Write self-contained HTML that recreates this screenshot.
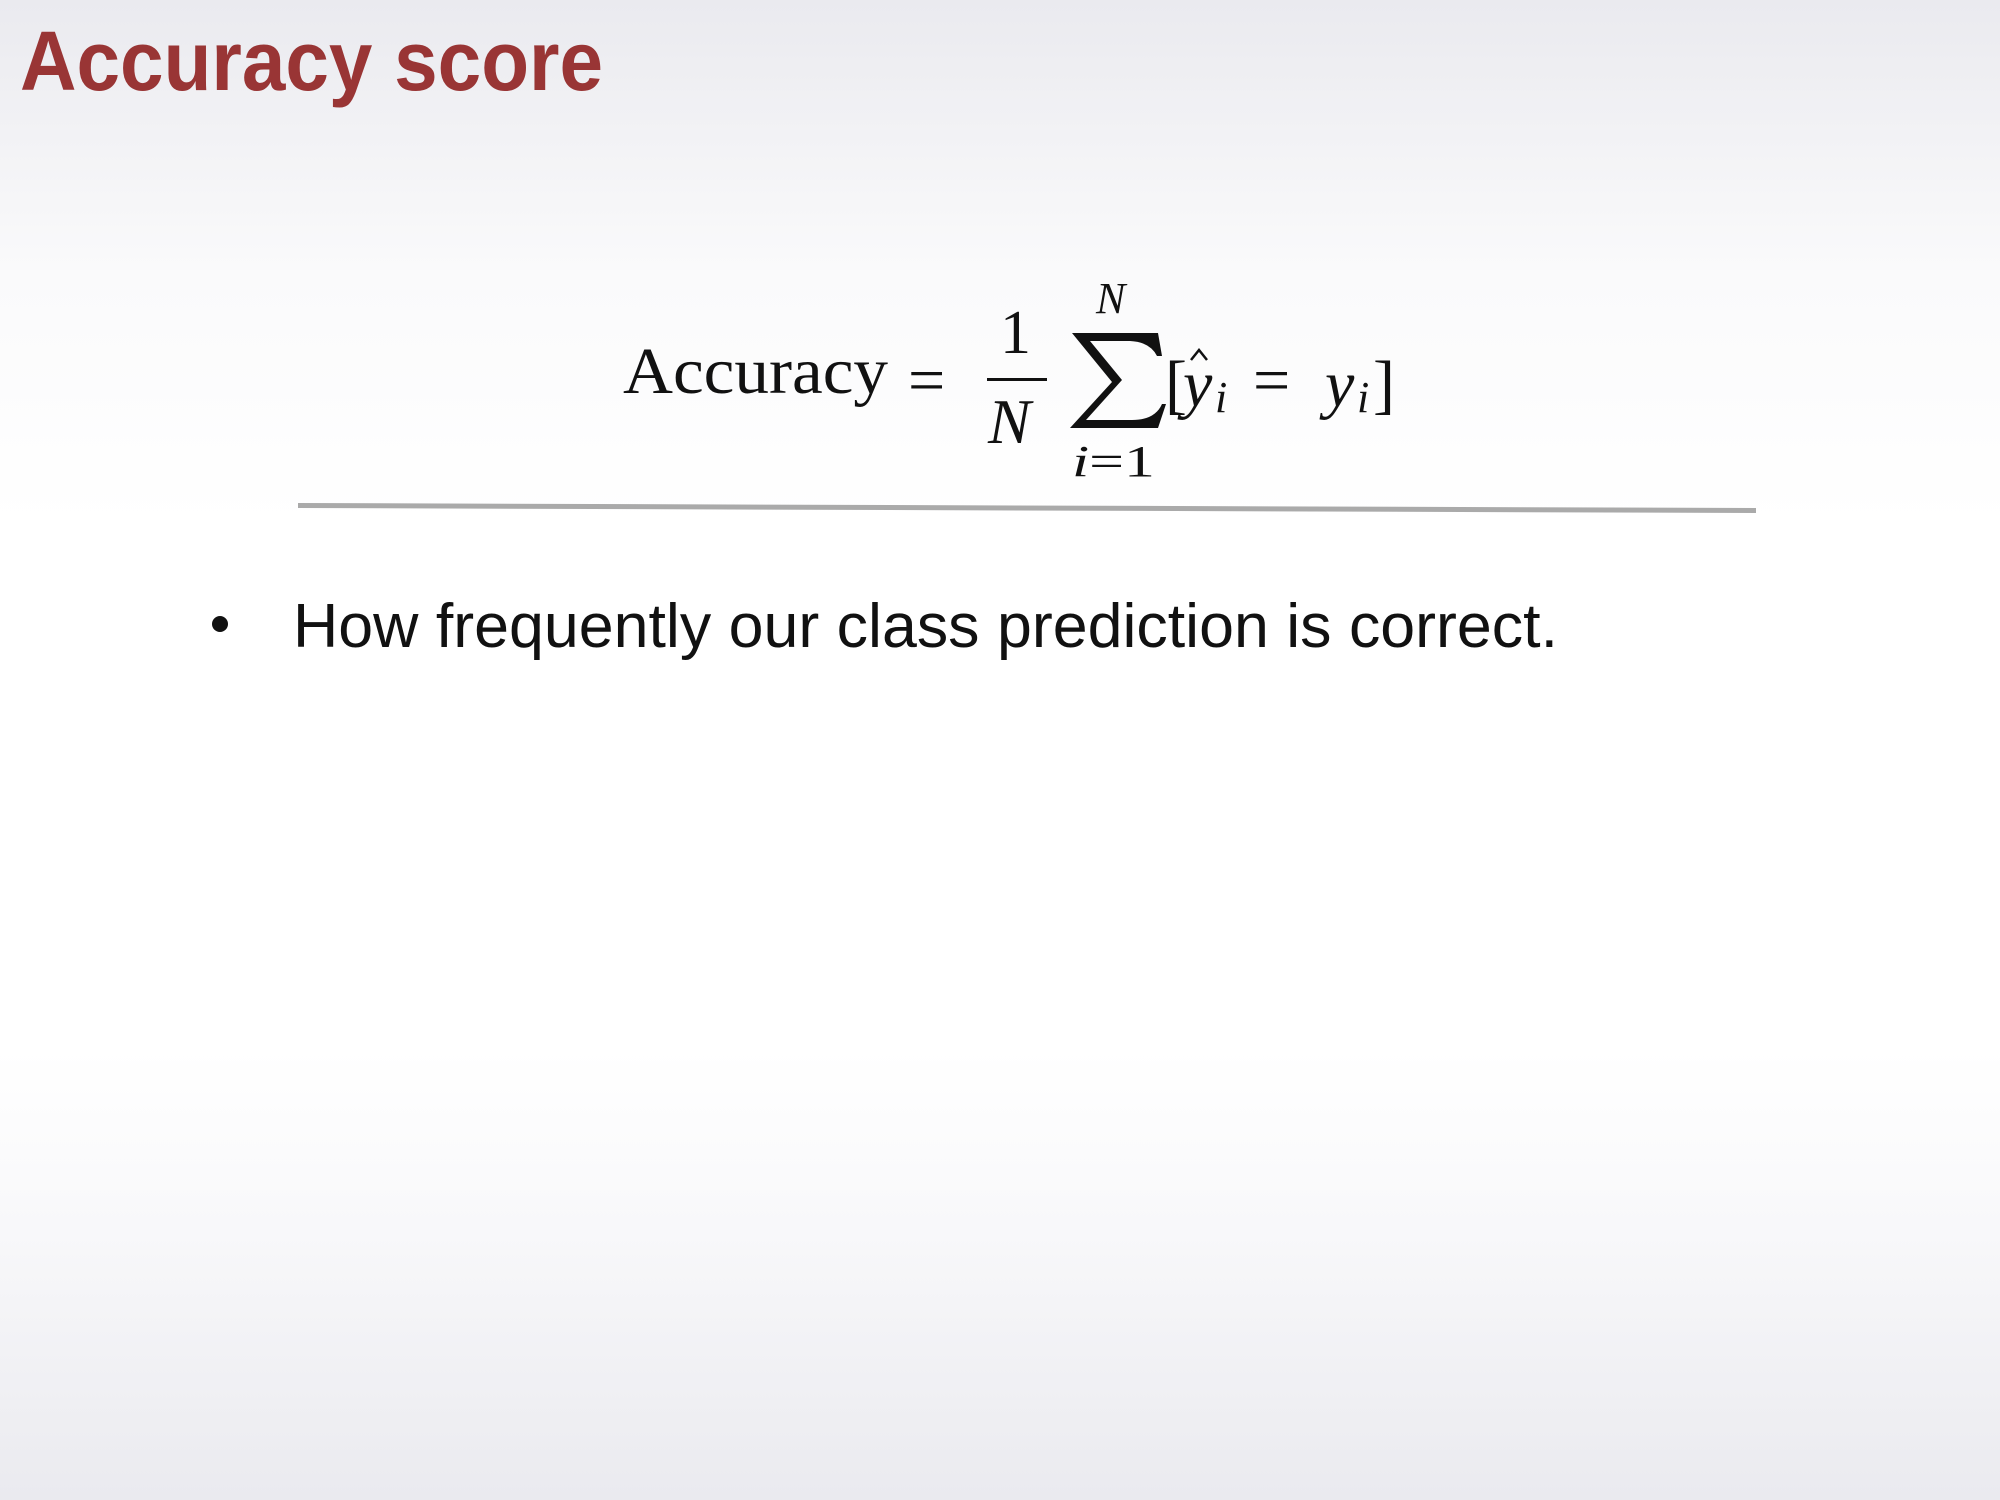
<!DOCTYPE html>
<html><head><meta charset="utf-8"><style>
html,body{margin:0;padding:0;}
body{width:2000px;height:1500px;overflow:hidden;background:linear-gradient(#eaeaef 0%,#fafafb 18%,#ffffff 35%,#ffffff 70%,#f8f8fa 82%,#eaeaef 100%);}
svg{display:block}
</style></head><body>
<svg width="2000" height="1500" viewBox="0 0 2000 1500" xmlns="http://www.w3.org/2000/svg">
<text x="20" y="90" font-family="Liberation Sans, sans-serif" font-weight="bold" font-size="84" fill="#993535" textLength="583" lengthAdjust="spacingAndGlyphs">Accuracy score</text>
<g font-family="Liberation Serif, serif" fill="#111">
<text x="623" y="393" font-size="66" textLength="265" lengthAdjust="spacingAndGlyphs">Accuracy</text>
<text x="908" y="402" font-size="66">=</text>
<text x="1000" y="353" font-size="62">1</text>
<rect x="987" y="378" width="60" height="3"/>
<text x="988" y="443" font-size="64" font-style="italic">N</text>
<text x="1096" y="313" font-size="44" font-style="italic">N</text>
<path d="M1072 333 L1158 333 L1162 356 L1157 356 Q1150 342 1130 341 L1090 341 L1122 380 L1086 420 L1132 420 Q1155 420 1162 404 L1166 404 L1158 428 L1070 428 L1112 382 Z"/>
<text x="1072" y="476" font-size="44" textLength="83" lengthAdjust="spacingAndGlyphs"><tspan font-style="italic">i</tspan>=1</text>
<text x="1165" y="406" font-size="66">[</text>
<text x="1183" y="406" font-size="66" font-style="italic">y</text>
<path d="M1191 360 L1199 350 L1207 360" stroke="#111" stroke-width="2.5" fill="none"/>
<text x="1215" y="412" font-size="44" font-style="italic">i</text>
<text x="1253" y="402" font-size="66">=</text>
<text x="1325" y="406" font-size="66" font-style="italic">y</text>
<text x="1357" y="412" font-size="44" font-style="italic">i</text>
<text x="1373" y="406" font-size="66">]</text>
</g>
<path d="M298 503 L1756 508 L1756 513 L298 508 Z" fill="#aaaaaa"/>
<circle cx="220" cy="624" r="8" fill="#111"/>
<text x="293" y="647" font-family="Liberation Sans, sans-serif" font-size="62" fill="#111" textLength="1265" lengthAdjust="spacingAndGlyphs">How frequently our class prediction is correct.</text>
</svg>
</body></html>
